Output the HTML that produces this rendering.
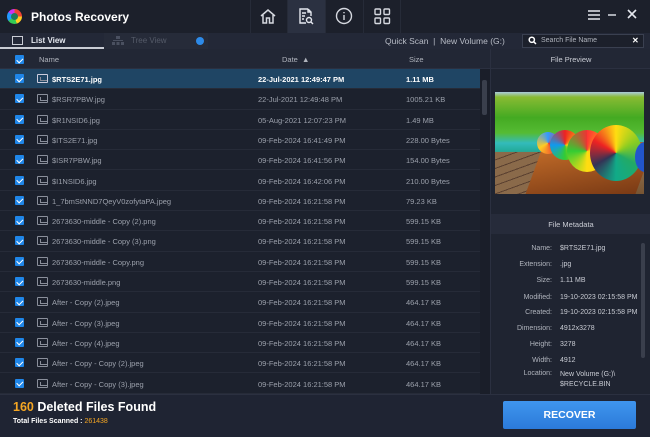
<!DOCTYPE html>
<html><head><meta charset="utf-8"><style>
*{margin:0;padding:0;box-sizing:border-box}
body{width:650px;height:437px;background:#1b1f2a;font-family:"Liberation Sans",sans-serif;color:#c9ccd4;overflow:hidden;position:relative;font-size:8px}
.abs{position:absolute}
.title{left:0;top:0;width:650px;height:33px;background:#1c202b}
.tab{top:0;height:33px;border-left:1px solid #262b38}
.tabbar{left:0;top:33px;width:650px;height:16px;background:#232837}
.hdr{left:0;top:49px;width:490px;height:20px;background:#222735;border-bottom:1px solid #2b3040}
.row{position:absolute;left:0;width:480px;height:20.3px;border-bottom:1px solid #262b38;font-size:7.5px;color:#9ba0ab}
.row span{position:absolute;top:6px}
.cb{position:absolute;left:15px;top:5px;width:9px;height:9px;background:#1f86e8;border-radius:1px}
.cb:after{content:"";position:absolute;left:2.5px;top:1.5px;width:3px;height:4.5px;border:solid #fff;border-width:0 1.3px 1.3px 0;transform:rotate(45deg)}
.ic{position:absolute;left:37px;top:5px;width:11px;height:9px;border:1px solid #8a8f9b;border-radius:1px}
.ic:after{content:"";position:absolute;left:1.5px;bottom:1px;width:6px;height:3px;border-bottom:1px solid #8a8f9b;border-left:1px solid #8a8f9b}
.sel{background:#1f4564;color:#fff;font-weight:bold}
.right{left:490px;top:49px;width:160px;height:345px;background:#1f2431;border-left:1px solid #2b3040}
.meta{position:absolute;font-size:7px;color:#c9ccd4}
.lbl{position:absolute;right:98px;width:70px;text-align:right;font-size:7px;color:#b0b4bd}
.foot{left:0;top:394px;width:650px;height:43px;background:#1f2433;border-top:1px solid #2b3040}
</style></head><body>
<div class="abs title">
 <div class="abs" style="left:7px;top:9px;width:15px;height:15px;border-radius:50%;background:conic-gradient(#e43 0 25%,#fc2 0 45%,#3c5 0 65%,#29f 0 85%,#c3e 0)"></div>
 <div class="abs" style="left:11px;top:13px;width:7px;height:7px;border-radius:50%;background:#1d7a5a"></div>
 <div class="abs" style="left:31px;top:10px;font-size:12px;font-weight:bold;color:#fff">Photos Recovery</div>
 <div class="abs tab" style="left:250px;width:37px"></div>
 <div class="abs tab" style="left:287px;width:38px;background:#2b3141"></div>
 <div class="abs tab" style="left:325px;width:38px"></div>
 <div class="abs tab" style="left:363px;width:38px;border-right:1px solid #262b38"></div>
 <svg class="abs" style="left:259px;top:8px" width="18" height="17" viewBox="0 0 18 17" fill="none" stroke="#d5d8df" stroke-width="1.5"><path d="M2 8L9 2l7 6M4 7v8h3.5v-5h3v5H14V7"/></svg>
 <svg class="abs" style="left:297px;top:7px" width="18" height="18" viewBox="0 0 18 18" fill="none" stroke="#e5e8ef" stroke-width="1.4"><path d="M11 2H3v14h6M11 2l3 3v4M11 2v3h3M5 6h4M5 9h3M5 12h2"/><circle cx="12" cy="13" r="2.5"/><path d="M14 15l2 2"/></svg>
 <svg class="abs" style="left:335px;top:7px" width="18" height="18" viewBox="0 0 18 18" fill="none" stroke="#d5d8df" stroke-width="1.4"><circle cx="9" cy="9" r="7.5"/><path d="M9 8v5M9 5v1.2"/></svg>
 <svg class="abs" style="left:374px;top:8px" width="17" height="17" viewBox="0 0 17 17" fill="none" stroke="#d5d8df" stroke-width="1.4"><rect x="1" y="1" width="5.5" height="5.5" rx="1"/><rect x="10" y="1" width="5.5" height="5.5" rx="1"/><rect x="1" y="10" width="5.5" height="5.5" rx="1"/><rect x="10" y="10" width="5.5" height="5.5" rx="1"/></svg>
 <svg class="abs" style="left:587px;top:9px" width="14" height="12" viewBox="0 0 14 12" stroke="#e5e8ef" stroke-width="1.6"><path d="M1 2h12M1 6h12M1 10h12"/></svg>
 <svg class="abs" style="left:607px;top:9px" width="10" height="12" stroke="#e5e8ef" stroke-width="1.4"><path d="M1 6h8"/></svg>
 <svg class="abs" style="left:626px;top:8px" width="12" height="12" stroke="#e5e8ef" stroke-width="1.6"><path d="M2 2l8 8M10 2l-8 8"/></svg>
</div>
<div class="abs tabbar">
 <div class="abs" style="left:0;top:0;width:104px;height:16px;border-bottom:2px solid #c9ccd4"></div>
 <div class="abs" style="left:12px;top:3px;width:11px;height:9px;border:1px solid #c9ccd4"></div>
 <div class="abs" style="left:31px;top:3px;font-size:8px;font-weight:bold;color:#e5e8ef">List View</div>
 <div class="abs" style="left:104px;top:0;width:104px;height:16px;background:#262b39"></div>
 <svg class="abs" style="left:112px;top:3px" width="12" height="10" fill="#4a5060"><rect x="4" y="0" width="4" height="3"/><rect x="0" y="6" width="3" height="3"/><rect x="4.5" y="6" width="3" height="3"/><rect x="9" y="6" width="3" height="3"/><rect x="1" y="4" width="10" height="1"/></svg>
 <div class="abs" style="left:131px;top:3px;font-size:8px;color:#555b69">Tree View</div>
 <div class="abs" style="left:196px;top:4px;width:8px;height:8px;border-radius:50%;background:#2d8ae8"></div>
 <div class="abs" style="left:385px;top:3px;font-size:8.5px;color:#b8bcc6">Quick Scan &nbsp;| &nbsp;New Volume (G:)</div>
 <div class="abs" style="left:522px;top:1px;width:122px;height:14px;border:1px solid #3a4050;background:#1c202b"></div>
 <svg class="abs" style="left:528px;top:3px" width="9" height="9" fill="none" stroke="#fff" stroke-width="1.5"><circle cx="3.8" cy="3.8" r="2.6"/><path d="M5.8 5.8L8 8"/></svg>
 <div class="abs" style="left:541px;top:3.5px;font-size:7px;color:#b0b4bd">Search File Name</div>
 <div class="abs" style="left:632px;top:2.5px;font-size:8px;color:#fff;font-weight:bold">✕</div>
</div>
<div class="abs hdr">
 <div class="cb" style="top:6px"></div>
 <div class="abs" style="left:39px;top:6px;font-size:7.5px;color:#b0b4bd">Name</div>
 <div class="abs" style="left:282px;top:6px;font-size:7.5px;color:#b0b4bd">Date &nbsp;▲</div>
 <div class="abs" style="left:409px;top:6px;font-size:7.5px;color:#b0b4bd">Size</div>
</div>
<div class="abs" style="left:0;top:69px;width:490px;height:325px;background:#1c212d;overflow:hidden">
<div class="row sel" style="top:0"><div class="cb"></div><div class="ic" style="border-color:#ccd"></div><span style="left:52px">$RTS2E71.jpg</span><span style="left:258px">22-Jul-2021 12:49:47 PM</span><span style="left:406px">1.11 MB</span></div>
<div class="row" style="top:20.3px"><div class="cb"></div><div class="ic"></div><span style="left:52px">$RSR7PBW.jpg</span><span style="left:258px">22-Jul-2021 12:49:48 PM</span><span style="left:406px">1005.21 KB</span></div>
<div class="row" style="top:40.6px"><div class="cb"></div><div class="ic"></div><span style="left:52px">$R1NSID6.jpg</span><span style="left:258px">05-Aug-2021 12:07:23 PM</span><span style="left:406px">1.49 MB</span></div>
<div class="row" style="top:60.9px"><div class="cb"></div><div class="ic"></div><span style="left:52px">$ITS2E71.jpg</span><span style="left:258px">09-Feb-2024 16:41:49 PM</span><span style="left:406px">228.00 Bytes</span></div>
<div class="row" style="top:81.2px"><div class="cb"></div><div class="ic"></div><span style="left:52px">$ISR7PBW.jpg</span><span style="left:258px">09-Feb-2024 16:41:56 PM</span><span style="left:406px">154.00 Bytes</span></div>
<div class="row" style="top:101.5px"><div class="cb"></div><div class="ic"></div><span style="left:52px">$I1NSID6.jpg</span><span style="left:258px">09-Feb-2024 16:42:06 PM</span><span style="left:406px">210.00 Bytes</span></div>
<div class="row" style="top:121.8px"><div class="cb"></div><div class="ic"></div><span style="left:52px">1_7bmStNND7QeyV0zofytaPA.jpeg</span><span style="left:258px">09-Feb-2024 16:21:58 PM</span><span style="left:406px">79.23 KB</span></div>
<div class="row" style="top:142.1px"><div class="cb"></div><div class="ic"></div><span style="left:52px">2673630-middle - Copy (2).png</span><span style="left:258px">09-Feb-2024 16:21:58 PM</span><span style="left:406px">599.15 KB</span></div>
<div class="row" style="top:162.4px"><div class="cb"></div><div class="ic"></div><span style="left:52px">2673630-middle - Copy (3).png</span><span style="left:258px">09-Feb-2024 16:21:58 PM</span><span style="left:406px">599.15 KB</span></div>
<div class="row" style="top:182.7px"><div class="cb"></div><div class="ic"></div><span style="left:52px">2673630-middle - Copy.png</span><span style="left:258px">09-Feb-2024 16:21:58 PM</span><span style="left:406px">599.15 KB</span></div>
<div class="row" style="top:203px"><div class="cb"></div><div class="ic"></div><span style="left:52px">2673630-middle.png</span><span style="left:258px">09-Feb-2024 16:21:58 PM</span><span style="left:406px">599.15 KB</span></div>
<div class="row" style="top:223.3px"><div class="cb"></div><div class="ic"></div><span style="left:52px">After - Copy (2).jpeg</span><span style="left:258px">09-Feb-2024 16:21:58 PM</span><span style="left:406px">464.17 KB</span></div>
<div class="row" style="top:243.6px"><div class="cb"></div><div class="ic"></div><span style="left:52px">After - Copy (3).jpeg</span><span style="left:258px">09-Feb-2024 16:21:58 PM</span><span style="left:406px">464.17 KB</span></div>
<div class="row" style="top:263.9px"><div class="cb"></div><div class="ic"></div><span style="left:52px">After - Copy (4).jpeg</span><span style="left:258px">09-Feb-2024 16:21:58 PM</span><span style="left:406px">464.17 KB</span></div>
<div class="row" style="top:284.2px"><div class="cb"></div><div class="ic"></div><span style="left:52px">After - Copy - Copy (2).jpeg</span><span style="left:258px">09-Feb-2024 16:21:58 PM</span><span style="left:406px">464.17 KB</span></div>
<div class="row" style="top:304.5px"><div class="cb"></div><div class="ic"></div><span style="left:52px">After - Copy - Copy (3).jpeg</span><span style="left:258px">09-Feb-2024 16:21:58 PM</span><span style="left:406px">464.17 KB</span></div>
<div class="abs" style="left:480px;top:0;width:10px;height:325px;background:#1a1e29"></div>
<div class="abs" style="left:482px;top:11px;width:5px;height:35px;background:#3a3f4c;border-radius:2px"></div>
</div>
<div class="abs right">
 <div class="abs" style="left:0;top:0;width:160px;height:20px;border-bottom:1px solid #2b3040;text-align:center;padding-top:6px;font-size:7.5px;color:#c9ccd4;background:#222735">File Preview</div>
 <div class="abs" style="left:4px;top:43px;width:149px;height:102px;overflow:hidden;background:linear-gradient(#acd 0,#8b3 5%,#4a2 25%,#5b3 40%,#3bb 50%,#2a9 58%,#975 62%,#753 100%)">
  <div class="abs" style="left:0;top:60px;width:60px;height:42px;background:repeating-linear-gradient(160deg,#8a6a4a 0 7px,#5a4030 7px 8px)"></div>
  <div class="abs" style="left:40px;top:50px;width:110px;height:52px;background:linear-gradient(170deg,#c8702a,#7a3a15);transform:skewX(-20deg)"></div>
  <div class="abs" style="left:42px;top:40px;width:22px;height:22px;border-radius:50%;background:conic-gradient(#39f,#e33,#fc2,#39f)"></div>
  <div class="abs" style="left:55px;top:38px;width:30px;height:30px;border-radius:50%;background:conic-gradient(#e22,#fc1,#3c3,#19e,#e22)"></div>
  <div class="abs" style="left:72px;top:38px;width:40px;height:42px;border-radius:50%;background:conic-gradient(#f33,#fc1,#fd1,#3c3,#e33)"></div>
  <div class="abs" style="left:95px;top:33px;width:52px;height:56px;border-radius:50%;background:conic-gradient(#fd1,#8c2,#2a6,#1a8,#335,#e22,#fd1)"></div>
  <div class="abs" style="left:140px;top:50px;width:20px;height:30px;border-radius:50%;background:#25c"></div>
 </div>
 <div class="abs" style="left:0;top:165px;width:160px;height:20px;background:#262b3a;text-align:center;padding-top:6px;font-size:7.5px;color:#c9ccd4">File Metadata</div>
 <div class="abs" style="left:150px;top:194px;width:4px;height:115px;background:#3a3f4c;border-radius:2px"></div>
</div>
<div class="lbl" style="top:245px">Name:</div><div class="meta" style="left:560px;top:245px">$RTS2E71.jpg</div>
<div class="lbl" style="top:261px">Extension:</div><div class="meta" style="left:560px;top:261px">.jpg</div>
<div class="lbl" style="top:277px">Size:</div><div class="meta" style="left:560px;top:277px">1.11 MB</div>
<div class="lbl" style="top:294px">Modified:</div><div class="meta" style="left:560px;top:294px">19-10-2023 02:15:58 PM</div>
<div class="lbl" style="top:309px">Created:</div><div class="meta" style="left:560px;top:309px">19-10-2023 02:15:58 PM</div>
<div class="lbl" style="top:325px">Dimension:</div><div class="meta" style="left:560px;top:325px">4912x3278</div>
<div class="lbl" style="top:341px">Height:</div><div class="meta" style="left:560px;top:341px">3278</div>
<div class="lbl" style="top:357px">Width:</div><div class="meta" style="left:560px;top:357px">4912</div>
<div class="lbl" style="top:370px">Location:</div><div class="meta" style="left:560px;top:370px;line-height:10px">New Volume (G:)\<br>$RECYCLE.BIN</div>
<div class="abs foot">
 <div class="abs" style="left:13px;top:5px;font-size:12.5px;font-weight:bold;color:#fff"><span style="color:#f5a623">160</span> Deleted Files Found</div>
 <div class="abs" style="left:13px;top:23px;font-size:7px;font-weight:bold;color:#fff">Total Files Scanned : <span style="color:#f5a623;font-weight:normal">261438</span></div>
 <div class="abs" style="left:503px;top:6px;width:133px;height:28px;background:linear-gradient(#3f95ee,#2b7ad9);border-radius:2px;text-align:center;padding-top:8px;font-size:10.5px;font-weight:bold;color:#fff">RECOVER</div>
</div>
</body></html>
